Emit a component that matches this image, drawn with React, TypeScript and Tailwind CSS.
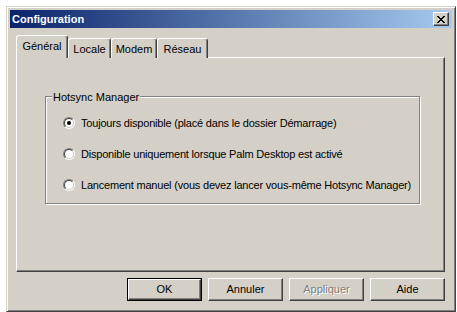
const raised =
  "border border-t-white border-l-white border-r-[#404040] border-b-[#404040] shadow-[inset_-1px_-1px_#808080,inset_1px_1px_#d4d0c8]";

function Radio({ checked }: { checked?: boolean }) {
  return (
    <span className="flex h-[12px] w-[12px] shrink-0 rounded-full border border-t-[#808080] border-l-[#808080] border-r-white border-b-white">
      <span className="flex flex-1 items-center justify-center rounded-full border border-t-[#404040] border-l-[#404040] border-r-[#d4d0c8] border-b-[#d4d0c8] bg-white">
        {checked ? <span className="h-[4px] w-[4px] rounded-full bg-black" /> : null}
      </span>
    </span>
  );
}

function Button({ label, primary, disabled }: { label: string; primary?: boolean; disabled?: boolean }) {
  const face = (
    <span
      className={`flex h-full w-full items-center justify-center font-normal ${raised} ${
        disabled ? "text-[#808080] [text-shadow:1px_1px_0_#fff]" : "text-black"
      }`}
    >
      {label}
    </span>
  );
  if (primary) {
    return <div className="h-[23px] w-[75px] border border-black">{face}</div>;
  }
  return <div className="h-[23px] w-[75px]">{face}</div>;
}

const tabs = [
  { label: "Général", width: "w-[52px]", active: true },
  { label: "Locale", width: "w-[43px]" },
  { label: "Modem", width: "w-[46px]" },
  { label: "Réseau", width: "w-[51px]" },
];

const options = [
  { label: "Toujours disponible (placé dans le dossier Démarrage)", checked: true },
  { label: "Disponible uniquement lorsque Palm Desktop est activé" },
  { label: "Lancement manuel (vous devez lancer vous-même Hotsync Manager)" },
];

export default function App() {
  return (
    <div className="min-h-screen bg-white pl-[6px] pt-[6px] font-['Liberation_Sans',Arial,sans-serif] text-[11px] leading-none text-black">
      <div className="flex h-[306px] w-[450px] flex-col border border-t-[#d4d0c8] border-l-[#d4d0c8] border-r-[#404040] border-b-[#404040] bg-[#d4d0c8] p-[3px] shadow-[inset_1px_1px_#fff,inset_-1px_-1px_#808080]">
        {/* title bar */}
        <div className="flex h-[18px] items-center justify-between bg-[linear-gradient(90deg,#0a246a_0%,#a6caf0_100%)] pl-[2px] pr-[3px]">
          <span className="font-bold text-white">Configuration</span>
          <button className={`flex h-[14px] w-[16px] items-center justify-center bg-[#d4d0c8] ${raised}`}>
            <svg width="8" height="7" viewBox="0 0 8 7" shapeRendering="crispEdges">
              <path d="M0 0h2v1h-2zM6 0h2v1h-2zM1 1h2v1h-2zM5 1h2v1h-2zM2 2h4v1h-4zM3 3h2v1h-2zM2 4h4v1h-4zM1 5h2v1h-2zM5 5h2v1h-2zM0 6h2v1h-2zM6 6h2v1h-2z" fill="#000" />
            </svg>
          </button>
        </div>

        {/* tabs */}
        <div className="ml-[6px] mr-[7px] mt-[8px]">
          <div className="relative z-10 -mb-px flex h-[22px] items-end">
            {tabs.map((tab) => (
              <div
                key={tab.label}
                className={`flex ${tab.width} items-center justify-center rounded-t-[3px] border-l border-t border-r border-l-white border-t-white border-r-[#404040] bg-[#d4d0c8] shadow-[inset_-1px_0_#808080] ${
                  tab.active ? "h-[23px] pb-[2px]" : "h-[20px] pt-[1px]"
                }`}
              >
                {tab.label}
              </div>
            ))}
          </div>
          <div className="h-[215px] border border-t-white border-l-white border-r-[#404040] border-b-[#404040] pl-[28px] pt-[38px] shadow-[inset_-1px_-1px_#808080]">
            <div className="relative h-[108px] w-[375px] border border-[#808080] shadow-[inset_1px_1px_#fff,1px_1px_#fff]">
              <span className="absolute left-[6px] top-[-5px] bg-[#d4d0c8] px-[1px]">Hotsync Manager</span>
              <div className="flex flex-col gap-[17px] pl-[17px] pt-[19px] tracking-[-0.2px]">
                {options.map((option) => (
                  <div key={option.label} className="flex h-[14px] items-center gap-[6px] whitespace-nowrap">
                    <Radio checked={option.checked} />
                    <span>{option.label}</span>
                  </div>
                ))}
              </div>
            </div>
          </div>
        </div>

        {/* buttons */}
        <div className="mr-[7px] mt-[6px] flex justify-end gap-[6px]">
          <Button label="OK" primary />
          <Button label="Annuler" />
          <Button label="Appliquer" disabled />
          <Button label="Aide" />
        </div>
      </div>
    </div>
  );
}
